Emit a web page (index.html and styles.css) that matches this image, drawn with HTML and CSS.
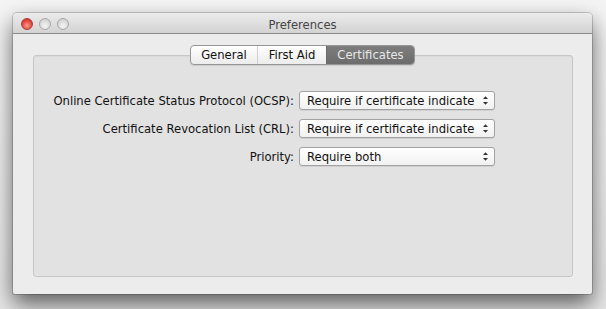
FILE: index.html
```html
<!DOCTYPE html>
<html>
<head>
<meta charset="utf-8">
<link rel="stylesheet" href="styles.css">
</head>
<body>
<div class="window">
  <div class="titlebar">
    <div class="lights">
      <span class="light close"></span>
      <span class="light min"></span>
      <span class="light max"></span>
    </div>
    <div class="title">Preferences</div>
  </div>
  <div class="content">
    <div class="tabbox">
      <div class="tabs">
        <span class="tab t1">General</span>
        <span class="tab t2">First Aid</span>
        <span class="tab t3 selected">Certificates</span>
      </div>
      <div class="form">
        <div class="row">
          <span class="label">Online Certificate Status Protocol (OCSP):</span>
          <span class="popup"><span class="ptext">Require if certificate indicate</span><span class="arrows"><svg width="7" height="11" viewBox="0 0 7 11"><path d="M1 4 L3.5 1.2 L6 4 Z M1 7 L3.5 9.8 L6 7 Z" fill="#333"/></svg></span></span>
        </div>
        <div class="row">
          <span class="label">Certificate Revocation List (CRL):</span>
          <span class="popup"><span class="ptext">Require if certificate indicate</span><span class="arrows"><svg width="7" height="11" viewBox="0 0 7 11"><path d="M1 4 L3.5 1.2 L6 4 Z M1 7 L3.5 9.8 L6 7 Z" fill="#333"/></svg></span></span>
        </div>
        <div class="row">
          <span class="label">Priority:</span>
          <span class="popup"><span class="ptext">Require both</span><span class="arrows"><svg width="7" height="11" viewBox="0 0 7 11"><path d="M1 4 L3.5 1.2 L6 4 Z M1 7 L3.5 9.8 L6 7 Z" fill="#333"/></svg></span></span>
        </div>
      </div>
    </div>
  </div>
</div>
</body>
</html>
```
FILE: styles.css
```css
html, body {
  margin: 0;
  padding: 0;
}
body {
  width: 606px;
  height: 309px;
  overflow: hidden;
  background: linear-gradient(#f4f4f4, #e6e6e6);
  font-family: "DejaVu Sans", "Liberation Sans", sans-serif;
  font-size: 11.6px;
  color: #111;
  padding: 13px 0 0 13px;
  box-sizing: border-box;
}
.window {
  width: 579px;
  height: 281px;
  background: #ececec;
  border-radius: 4px 4px 2px 2px;
  box-shadow: 0 10px 22px rgba(0,0,0,0.6), 0 0 0 1px rgba(0,0,0,0.18);
  display: flex;
  flex-direction: column;
  overflow: hidden;
}
.titlebar {
  height: 20px;
  background: linear-gradient(#ebebeb, #d3d3d3);
  border-bottom: 1px solid #8a8a8a;
  display: flex;
  align-items: center;
  position: relative;
}
.lights {
  display: flex;
  gap: 6px;
  padding-left: 8px;
  padding-top: 2px;
}
.light {
  width: 12px;
  height: 12px;
  border-radius: 50%;
  box-sizing: border-box;
  border: 1px solid #a8a8a8;
  background: radial-gradient(circle at 50% 70%, #f4f4f4, #c8c8c8);
}
.light.close {
  border-color: #b23a33;
  background: radial-gradient(circle at 50% 65%, #ff9a8f, #e0443a 60%, #b8322b);
}
.title {
  position: absolute;
  left: 0;
  right: 0;
  text-align: center;
  font-size: 11.6px;
  color: #444;
  top: 5px;
}
.content {
  flex: 1;
  padding: 21px 19px 17px 20px;
  display: flex;
}
.tabbox {
  flex: 1;
  background: #e2e2e2;
  border: 1px solid #c6c6c6;
  border-radius: 3px;
  box-shadow: inset 0 1px 1px rgba(0,0,0,0.04);
  position: relative;
  padding-top: 35px;
}
.tabs {
  position: absolute;
  top: -11px;
  left: 156px;
  display: flex;
  height: 20px;
  box-sizing: border-box;
  border: 1px solid #969696;
  border-radius: 4px;
  overflow: hidden;
  background: linear-gradient(#ffffff, #ececec);
  box-shadow: 0 1px 1px rgba(0,0,0,0.1);
}
.tab {
  display: flex;
  align-items: center;
  justify-content: center;
  white-space: nowrap;
  box-sizing: border-box;
  border-left: 1px solid #cfcfcf;
  color: #111;
}
.t1 {
  border-left: none;
  width: 66px;
}
.t2 {
  width: 69px;
}
.t3 {
  width: 88px;
}
.tab.selected {
  background: linear-gradient(#7d7d7d, #6c6c6c);
  color: #e8e8e8;
  border-left: 1px solid #6a6a6a;
}
.form {
  display: flex;
  flex-direction: column;
  gap: 9px;
}
.row {
  display: flex;
  align-items: center;
  height: 19px;
}
.label {
  width: 260px;
  text-align: right;
  padding-right: 5px;
  white-space: nowrap;
}
.popup {
  width: 196px;
  height: 19px;
  box-sizing: border-box;
  border: 1px solid #a2a2a2;
  border-radius: 3px;
  background: linear-gradient(#ffffff, #f1f1f1);
  display: flex;
  align-items: center;
  padding-left: 7px;
  box-shadow: 0 1px 0 rgba(0,0,0,0.08);
}
.ptext {
  flex: 1;
  white-space: nowrap;
  overflow: hidden;
}
.arrows {
  width: 18px;
  display: flex;
  align-items: center;
  justify-content: center;
}
```
